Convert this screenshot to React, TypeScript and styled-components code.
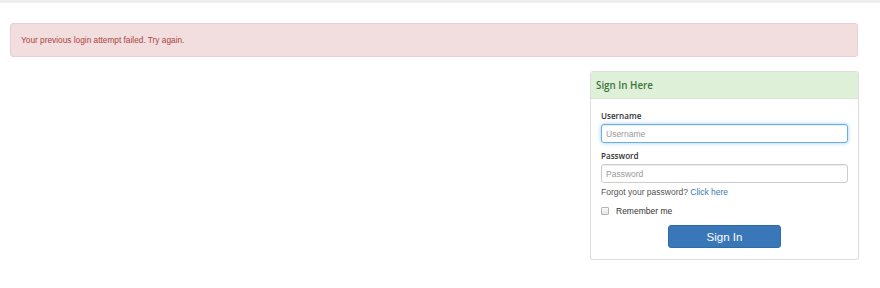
import React from "react";
import styled, { createGlobalStyle } from "styled-components";

const Global = createGlobalStyle`
  html, body { margin: 0; padding: 0; background: #fff; }
  body { font-family: "Liberation Sans", Arial, sans-serif; color: #333; }
  * { box-sizing: border-box; }
`;

const TopLine = styled.div`
  height: 3px;
  background: #eeeeee;
`;

const Main = styled.main`
  padding: 0 22px 0 10px;
`;

const Alert = styled.div`
  margin-top: 20px;
  height: 34px;
  padding: 0 10px;
  background: #f2dede;
  border: 1px solid #ebccd1;
  border-radius: 3px;
  color: #a94442;
  font-size: 8.3px;
  line-height: 32px;
`;

const Row = styled.div`
  display: flex;
  justify-content: flex-end;
  margin-top: 14px;
  margin-right: -1px;
`;

const Panel = styled.section`
  width: 269px;
  border: 1px solid #dddddd;
  border-radius: 3px;
  background: #fff;
  box-shadow: 0 1px 1px rgba(0, 0, 0, 0.05);
  overflow: hidden;
`;

const PanelHeader = styled.div`
  height: 27px;
  padding: 0 5px;
  display: flex;
  align-items: center;
  background: #dff0d8;
  border-bottom: 1px solid #d6e9c6;
  color: #3c763d;
  font-family: "Open Sans", sans-serif;
  font-weight: 600;
  font-size: 9.8px;
`;

const PanelBody = styled.div`
  padding: 11px 10px 11px 10px;
  display: flex;
  flex-direction: column;
`;

const Label = styled.label`
  display: block;
  font-family: "Open Sans", sans-serif;
  font-weight: 600;
  font-size: 8.1px;
  color: #333;
  line-height: 12px;
  margin-bottom: 2px;
`;

const Input = styled.input<{ $focus?: boolean; $gap: number }>`
  display: block;
  width: 100%;
  height: 19px;
  padding: 0 4px;
  font-family: "Liberation Sans", Arial, sans-serif;
  font-size: 8.5px;
  color: #555;
  border: 1px solid ${(p) => (p.$focus ? "#66afe9" : "#cccccc")};
  border-radius: 3px;
  outline: none;
  box-shadow: ${(p) =>
    p.$focus
      ? "inset 0 1px 1px rgba(0,0,0,.075), 0 0 4px rgba(102,175,233,.6)"
      : "inset 0 1px 1px rgba(0,0,0,.075)"};
  margin-bottom: ${(p) => p.$gap}px;
  &::placeholder { color: #999; }
`;

const Help = styled.div`
  font-size: 8.5px;
  color: #555;
  line-height: 12px;
`;

const Link = styled.a`
  color: #337ab7;
  text-decoration: none;
`;

const CheckRow = styled.label`
  display: flex;
  align-items: center;
  gap: 6px;
  margin-top: 7px;
  font-size: 8.5px;
  color: #333;
  line-height: 12px;
`;

const Box = styled.span`
  width: 8px;
  height: 8px;
  border: 1px solid #b5b5b5;
  border-radius: 1px;
  background: linear-gradient(#fafafa, #e4e4e4);
  margin-right: 1px;
`;

const Button = styled.button`
  align-self: center;
  margin-top: 8px;
  width: 113px;
  height: 23px;
  border: 1px solid #2e6da4;
  border-radius: 3px;
  background: #3a77b8;
  color: #fff;
  font-family: "Liberation Sans", Arial, sans-serif;
  font-size: 11.5px;
  cursor: pointer;
`;

export default function App() {
  return (
    <>
      <Global />
      <TopLine />
      <Main>
        <Alert>Your previous login attempt failed. Try again.</Alert>
        <Row>
          <Panel>
            <PanelHeader>Sign In Here</PanelHeader>
            <PanelBody>
              <Label>Username</Label>
              <Input $focus $gap={7} placeholder="Username" />
              <Label>Password</Label>
              <Input $gap={3} type="password" placeholder="Password" />
              <Help>
                Forgot your password? <Link href="#">Click here</Link>
              </Help>
              <CheckRow>
                <Box />
                Remember me
              </CheckRow>
              <Button>Sign In</Button>
            </PanelBody>
          </Panel>
        </Row>
      </Main>
    </>
  );
}
